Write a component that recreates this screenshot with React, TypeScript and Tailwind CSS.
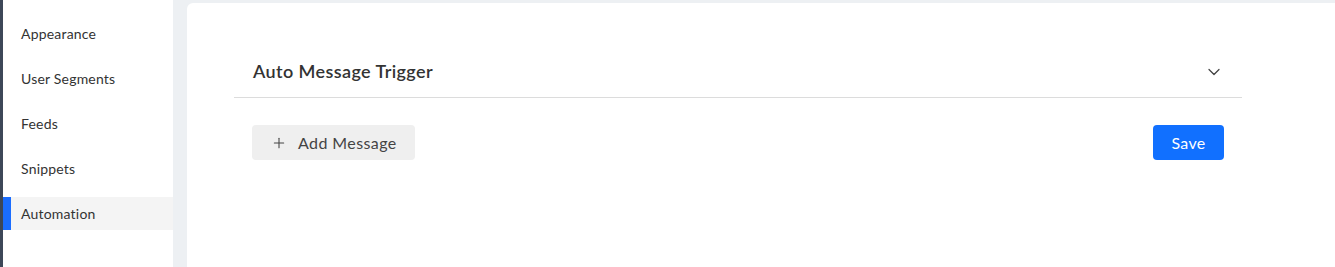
import { Plus, ChevronDown } from "lucide-react";

const NAV = ["Appearance", "User Segments", "Feeds", "Snippets", "Automation"];

export default function App() {
  const active = "Automation";

  return (
    <div
      className="flex h-[267px] w-[1335px] overflow-hidden bg-[#edf0f3]"
      style={{ fontFamily: "Lato, 'Open Sans', sans-serif" }}
    >
      {/* dark edge */}
      <div className="w-[3px] bg-[#3d4758]" />

      {/* Sidebar */}
      <aside className="w-[170px] bg-white pt-[17px]">
        <nav className="flex flex-col gap-[12px]">
          {NAV.map((item) => {
            const isActive = item === active;
            return (
              <div
                key={item}
                className={`relative flex h-[33px] items-center pl-[18px] text-[14px] tracking-[0.2px] text-[#333] ${
                  isActive ? "bg-[#f4f4f4]" : ""
                }`}
              >
                {isActive && <span className="absolute left-0 top-0 h-full w-[8px] bg-[#1a6dff]" />}
                {item}
              </div>
            );
          })}
        </nav>
      </aside>

      {/* Main card */}
      <main className="ml-[14px] mt-[3px] flex-1 rounded-tl-[6px] bg-white pl-[47px] pr-[93px] pt-[43px]">
        <div className="flex h-[52px] items-center justify-between border-b border-[#dcdcdc] pl-[19px] pr-[18px]">
          <h2 className="text-[18px] font-semibold tracking-[0.4px] text-[#333]">Auto Message Trigger</h2>
          <ChevronDown className="h-[20px] w-[20px] text-[#444]" strokeWidth={1.5} />
        </div>

        <div className="mt-[27px] flex items-center justify-between px-[18px]">
          <button className="flex h-[35px] w-[163px] items-center gap-[11px] rounded-[4px] bg-[#efefef] pl-[19px] text-[16px] tracking-[0.4px] text-[#444]">
            <Plus className="h-[16px] w-[16px] text-[#444]" strokeWidth={1.6} />
            Add Message
          </button>
          <button className="flex h-[35px] w-[71px] items-center justify-center rounded-[4px] bg-[#1170ff] text-[16px] tracking-[0.3px] text-white">
            Save
          </button>
        </div>
      </main>
    </div>
  );
}
